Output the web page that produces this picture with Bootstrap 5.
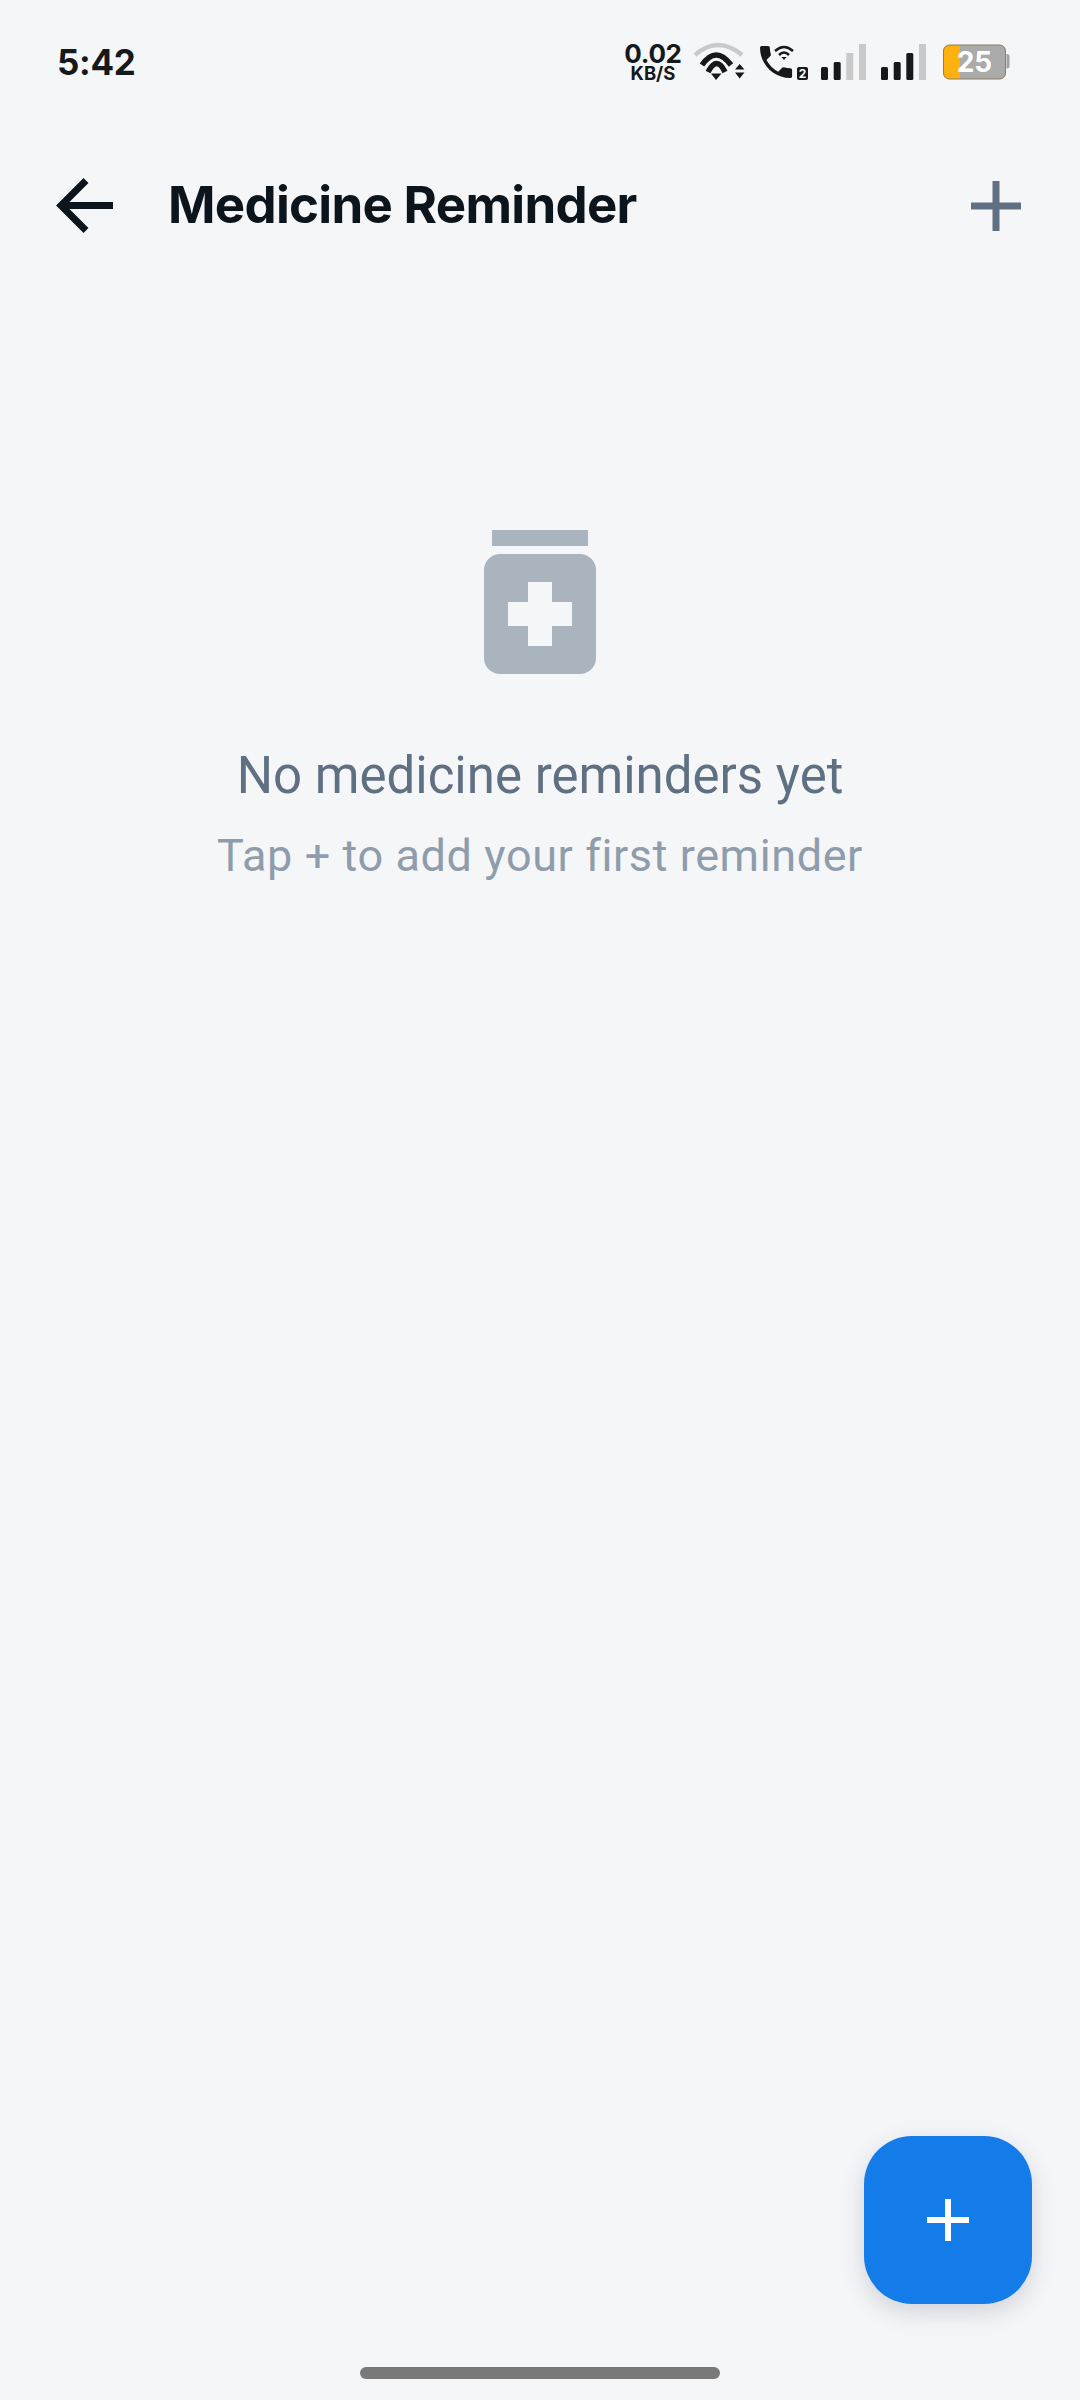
<!DOCTYPE html>
<html lang="en">
<head>
<meta charset="UTF-8">
<meta name="viewport" content="width=device-width, initial-scale=1.0">
<title>Medicine Reminder</title>
<link href="https://cdn.jsdelivr.net/npm/bootstrap@5.3.3/dist/css/bootstrap.min.css" rel="stylesheet">
<style>
    body { background: #f5f6f8; font-family: Roboto, sans-serif; }
    .app-page { height: 2400px; }
    .status-row { height: 124px; padding: 0 70px 0 57px; color: #16191c; font-family: Inter, sans-serif; }
    .status-time { font-size: 35px; font-weight: 700; line-height: 1; letter-spacing: -.3px; }
    .net-speed { width: 58px; font-weight: 700; }
    .net-value { font-size: 26px; line-height: 19px; letter-spacing: -.3px; }
    .net-unit { font-size: 18.5px; line-height: 14px; margin-top: 3px; }
    .app-header { height: 164px; padding: 0 59px 0 56px; }
    .back-btn { width: 112px; }
    .app-title { font-family: Inter, sans-serif; font-size: 51px; font-weight: 700; color: #0d151c; letter-spacing: -.7px; line-height: 60px; margin-top: -3px; }
    .empty-state { padding-top: 242px; }
    .bottle-icon { margin-bottom: 72px; }
    .empty-title { font-size: 51px; font-weight: 400; color: #607083; line-height: 60px; margin-bottom: 24px; }
    .empty-sub { font-size: 45px; color: #8f9cab; line-height: 52px; letter-spacing: .6px; }
    .fab-add { width: 168px; height: 168px; right: 48px; bottom: 96px; border-radius: 48px; background: #147ce8; border: 0; box-shadow: 0 8px 24px rgba(40, 50, 70, .18); }
    .home-bar { width: 360px; height: 12px; bottom: 21px; left: 360px; background: #797979; border-radius: 6px; }
</style>
</head>
<body>
<div class="app-page position-relative d-flex flex-column">
    <!-- Barra de status -->
    <div class="status-row d-flex align-items-center justify-content-between">
        <div class="status-time">5:42</div>
        <div class="d-flex align-items-center gap-2">
            <div class="net-speed text-center">
                <div class="net-value">0.02</div>
                <div class="net-unit">KB/S</div>
            </div>
            <svg width="58" height="40" viewBox="-2 0 58 40">
                <path d="M3 13Q26 -7 50 13" fill="none" stroke="#c9c9c9" stroke-width="4.500"/>
                <path d="M10 23Q24 3 39 23" fill="none" stroke="#16191c" stroke-width="5.500"/>
                <path d="M16 30Q25 13 33 30" fill="none" stroke="#16191c" stroke-width="5.500"/>
                <path d="M19 31.500H29.500L24 38Z" fill="#16191c"/>
                <path d="M43 27.500L47.700 22L52.400 27.500ZM43 30.500H52.400L47.700 36.500Z" fill="#16191c"/>
            </svg>
            <svg width="52" height="40" viewBox="0 0 52 40">
                <path transform="translate(-1.300 -1.300) scale(1.780)" d="M6.62 10.79c1.44 2.83 3.76 5.14 6.59 6.59l2.2-2.2c.27-.27.67-.36 1.02-.24 1.12.37 2.33.57 3.57.57.55 0 1 .45 1 1V20c0 .55-.45 1-1 1-9.39 0-17-7.61-17-17 0-.55.45-1 1-1h3.5c.55 0 1 .45 1 1 0 1.25.2 2.45.57 3.57.11.35.03.74-.25 1.02l-2.2 2.2z" fill="#16191c"/>
                <path d="M19 9Q28 1 37 9M23 13Q28 8 33 13" fill="none" stroke="#16191c" stroke-width="2.500"/>
                <path d="M25.500 15H30.500L28 18Z" fill="#16191c"/>
                <rect x="41" y="25" width="11" height="13" rx="2" fill="#16191c"/>
                <text x="46.500" y="36" text-anchor="middle" font-family="Inter" font-size="12" font-weight="700" fill="#fff">2</text>
            </svg>
            <svg width="51" height="36" viewBox="-5 0 51 36">
                <rect x="0" y="23" width="7" height="13" rx="1.500" fill="#16191c"/>
                <rect x="12.700" y="18" width="7" height="18" rx="1.500" fill="#16191c"/>
                <rect x="25.300" y="9" width="7" height="27" fill="#c9c9c9"/>
                <rect x="38" y="0" width="7" height="36" fill="#c9c9c9"/>
            </svg>
            <svg width="52" height="36" viewBox="-6 0 52 36">
                <rect x="0" y="23" width="7" height="13" rx="1.500" fill="#16191c"/>
                <rect x="12.700" y="18" width="7" height="18" rx="1.500" fill="#16191c"/>
                <rect x="25.300" y="9" width="7" height="27" rx="1.500" fill="#16191c"/>
                <rect x="38" y="0" width="7" height="36" fill="#c9c9c9"/>
            </svg>
            <svg width="75" height="36" viewBox="-8 0 75 36">
                <path d="M6 1H17V35H6A5.500 5.500 0 0 1 .5 29.500V6.500A5.500 5.500 0 0 1 6 1Z" fill="#fdb10e"/>
                <path d="M17 1H57A5.500 5.500 0 0 1 62.500 6.500V29.500A5.500 5.500 0 0 1 57 35H17Z" fill="#aaaaaa"/>
                <rect x=".5" y="1" width="62" height="34" rx="6" fill="none" stroke="#8c7d5c" stroke-width="1"/>
                <path d="M63.500 10H64A2.500 2.500 0 0 1 66.500 12.500V22A2.500 2.500 0 0 1 64 24.500H63.500Z" fill="#a0a0a0"/>
                <text x="31.500" y="28" text-anchor="middle" font-family="Inter" font-size="28" font-weight="700" fill="#fff">25</text>
            </svg>
        </div>
    </div>

    <!-- Cabeçalho -->
    <div class="app-header d-flex align-items-center">
        <div class="back-btn d-flex">
            <svg width="58" height="56" viewBox="0 0 58 56">
                <path d="M30 2.500L5 27.500L30 52.500M5 27.500H57" fill="none" stroke="#0d151c" stroke-width="7"/>
            </svg>
        </div>
        <div class="app-title flex-grow-1">Medicine Reminder</div>
        <svg width="50" height="50" viewBox="0 0 50 50">
            <path d="M25 0V50M0 25H50" stroke="#607083" stroke-width="7"/>
        </svg>
    </div>

    <!-- Lista vazia -->
    <div class="empty-state d-flex flex-column align-items-center text-center">
        <svg class="bottle-icon" width="112" height="144" viewBox="0 0 112 144">
            <rect x="8" y="0" width="96" height="16" fill="#a9b4be"/>
            <path fill-rule="evenodd" d="M16 24H96A16 16 0 0 1 112 40V128A16 16 0 0 1 96 144H16A16 16 0 0 1 0 128V40A16 16 0 0 1 16 24ZM44 52V72H24V96H44V116H68V96H88V72H68V52Z" fill="#a9b4be"/>
        </svg>
        <div class="empty-title">No medicine reminders yet</div>
        <div class="empty-sub">Tap + to add your first reminder</div>
    </div>

    <button class="fab-add position-absolute d-flex align-items-center justify-content-center" type="button">
        <svg width="42" height="42" viewBox="0 0 42 42">
            <path d="M21 0V42M0 21H42" stroke="#fff" stroke-width="6"/>
        </svg>
    </button>
    <div class="home-bar position-absolute"></div>
</div>

<script src="https://cdn.jsdelivr.net/npm/bootstrap@5.3.3/dist/js/bootstrap.bundle.min.js"></script>
</body>
</html>
